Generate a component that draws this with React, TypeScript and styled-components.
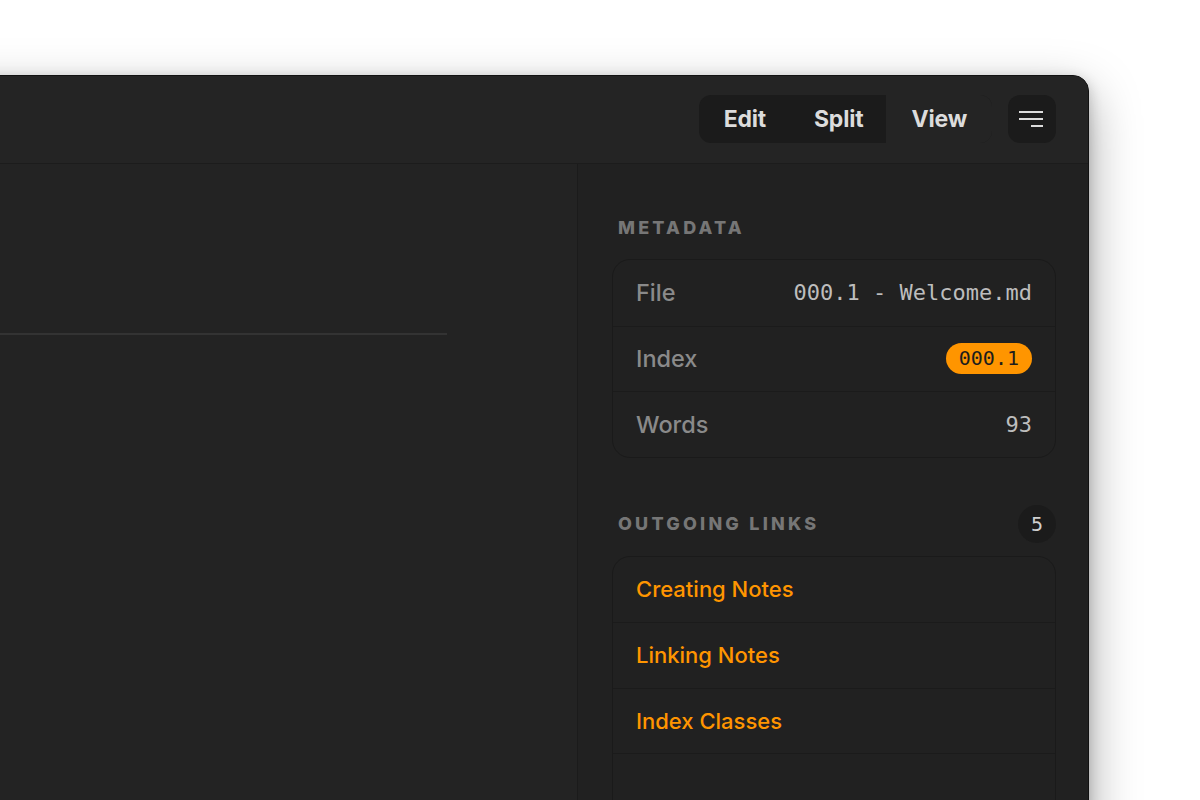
import styled, { createGlobalStyle } from 'styled-components';

const GlobalStyle = createGlobalStyle`
  html, body {
    margin: 0;
    padding: 0;
    background: #ffffff;
    overflow: hidden;
  }
  * {
    box-sizing: border-box;
  }
`;

const Page = styled.div`
  height: 800px;
  padding-top: 75px;
  overflow: hidden;
  font-family: 'Inter', 'Noto Sans', sans-serif;
`;

const Window = styled.div`
  margin-left: -120px;
  width: 1209px;
  height: 760px;
  background: #232323;
  border: 1px solid #121212;
  border-radius: 0 16px 0 0;
  box-shadow: 0 18px 50px rgba(0, 0, 0, 0.35), 0 4px 14px rgba(0, 0, 0, 0.2);
  display: flex;
  flex-direction: column;
  overflow: hidden;
`;

const Header = styled.header`
  height: 88px;
  flex-shrink: 0;
  display: flex;
  justify-content: flex-end;
  align-items: center;
  gap: 16px;
  padding-right: 32px;
  padding-bottom: 2px;
  background: #242424;
  border-bottom: 1px solid #1c1c1c;
`;

const Segmented = styled.div`
  display: flex;
  height: 48px;
  border-radius: 12px;
  background: #1b1b1b;
  overflow: hidden;
`;

const Segment = styled.button<{ $active?: boolean; $pad: number }>`
  border: none;
  margin: 0;
  padding: 0 ${(p) => p.$pad}px;
  background: ${(p) => (p.$active ? '#242424' : 'transparent')};
  color: #dcdcdc;
  font-family: 'Inter', sans-serif;
  font-size: 23px;
  font-weight: 700;
  letter-spacing: -0.2px;
  cursor: pointer;
`;

const MenuButton = styled.button`
  width: 48px;
  height: 48px;
  border: none;
  border-radius: 12px;
  background: #1b1b1b;
  display: flex;
  align-items: center;
  justify-content: center;
  padding: 0;
  cursor: pointer;
`;

const Body = styled.div`
  flex: 1;
  display: flex;
  min-height: 0;
`;

const Editor = styled.main`
  flex: 1;
  padding: 169px 130px 0 0;
  background: #232323;
`;

const Rule = styled.hr`
  margin: 0;
  border: none;
  height: 2px;
  background: #333333;
`;

const Sidebar = styled.aside`
  width: 511px;
  flex-shrink: 0;
  background: #212121;
  border-left: 1px solid #1b1b1b;
  padding: 44px 32px 0 34px;
  display: flex;
  flex-direction: column;
`;

const Section = styled.section<{ $gap?: number }>`
  margin-top: ${(p) => p.$gap ?? 0}px;
`;

const SectionHead = styled.div`
  height: 38px;
  display: flex;
  align-items: center;
  justify-content: space-between;
  padding-left: 6px;
  margin-bottom: 13px;
`;

const SectionTitle = styled.h3`
  margin: 0;
  font-size: 18px;
  font-weight: 800;
  letter-spacing: 3.2px;
  color: #767676;
  text-transform: uppercase;
`;

const Count = styled.span`
  width: 38px;
  height: 38px;
  border-radius: 50%;
  background: #1b1b1b;
  color: #d0d0d0;
  font-family: 'DejaVu Sans Mono', monospace;
  font-size: 20px;
  display: flex;
  align-items: center;
  justify-content: center;
`;

const Card = styled.div`
  border: 1px solid #1a1a1a;
  border-radius: 18px;
  background: #212121;
  overflow: hidden;
`;

const Row = styled.div`
  height: 65.5px;
  display: flex;
  align-items: center;
  justify-content: space-between;
  padding: 0 23px;
  & + & {
    border-top: 1px solid #1b1b1b;
  }
`;

const Label = styled.span`
  font-size: 23.5px;
  font-weight: 500;
  color: #8a8a8a;
`;

const Value = styled.span`
  font-family: 'DejaVu Sans Mono', monospace;
  font-size: 22px;
  color: #bdbdbd;
`;

const Pill = styled.span`
  font-family: 'DejaVu Sans Mono', monospace;
  font-size: 20px;
  color: #1d1d1d;
  background: #ff9500;
  border-radius: 999px;
  padding: 2px 13px;
  line-height: 27px;
`;

const LinkItem = styled.a`
  font-size: 22px;
  font-weight: 500;
  color: #ff9500;
  text-decoration: none;
`;

const MenuIcon = () => (
  <svg width="26" height="18" viewBox="0 0 26 18">
    <g stroke="#dcdcdc" strokeWidth="2" strokeLinecap="butt">
      <line x1="0" y1="2" x2="24" y2="2" />
      <line x1="0" y1="9" x2="24" y2="9" />
      <line x1="12" y1="16" x2="24" y2="16" />
    </g>
  </svg>
);

const meta = [
  { label: 'File', value: '000.1 - Welcome.md' },
  { label: 'Index', value: '000.1', pill: true },
  { label: 'Words', value: '93' },
];

const links = ['Creating Notes', 'Linking Notes', 'Index Classes', ''];

export default function App() {
  return (
    <>
      <GlobalStyle />
      <Page>
        <Window>
          <Header>
            <Segmented>
              <Segment $pad={25}>Edit</Segment>
              <Segment $pad={23}>Split</Segment>
              <Segment $pad={25} $active>
                View
              </Segment>
            </Segmented>
            <MenuButton aria-label="Menu">
              <MenuIcon />
            </MenuButton>
          </Header>
          <Body>
            <Editor>
              <Rule />
            </Editor>
            <Sidebar>
              <Section>
                <SectionHead>
                  <SectionTitle>Metadata</SectionTitle>
                </SectionHead>
                <Card>
                  {meta.map((m) => (
                    <Row key={m.label}>
                      <Label>{m.label}</Label>
                      {m.pill ? <Pill>{m.value}</Pill> : <Value>{m.value}</Value>}
                    </Row>
                  ))}
                </Card>
              </Section>
              <Section $gap={47}>
                <SectionHead>
                  <SectionTitle>Outgoing Links</SectionTitle>
                  <Count>5</Count>
                </SectionHead>
                <Card>
                  {links.map((l, i) => (
                    <Row key={i}>
                      <LinkItem>{l}</LinkItem>
                    </Row>
                  ))}
                </Card>
              </Section>
            </Sidebar>
          </Body>
        </Window>
      </Page>
    </>
  );
}
